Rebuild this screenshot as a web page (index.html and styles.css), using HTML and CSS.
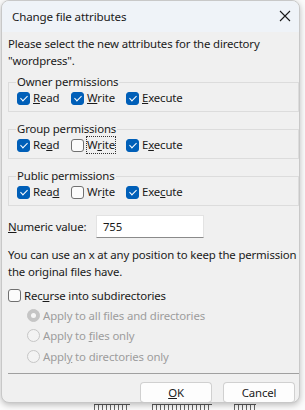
FILE: index.html
```html
<!DOCTYPE html>
<html>
<head>
<meta charset="utf-8">
<link rel="stylesheet" href="styles.css">
</head>
<body>
<div class="behind" aria-hidden="true">
  <span class="frag w1"></span><span class="frag w2"></span><span class="frag w3"></span>
</div>
<div class="dialog">
  <div class="titlebar">
    <span class="title">Change file attributes</span>
    <svg class="close" width="12" height="12" viewBox="0 0 12 12"><path d="M1 1 L11 11 M11 1 L1 11" stroke="#1a1a1a" stroke-width="1.1" fill="none"/></svg>
  </div>
  <div class="content">
    <p class="intro">Please select the new attributes for the directory<br>"wordpress".</p>
    <fieldset class="group">
      <legend>Owner permissions</legend>
      <div class="row">
        <label class="chk"><span class="box on"></span><span><u>R</u>ead</span></label>
        <label class="chk"><span class="box on"></span><span><u>W</u>rite</span></label>
        <label class="chk"><span class="box on"></span><span><u>E</u>xecute</span></label>
      </div>
    </fieldset>
    <fieldset class="group">
      <legend>Group permissions</legend>
      <div class="row">
        <label class="chk"><span class="box on"></span><span>Re<u>a</u>d</span></label>
        <label class="chk"><span class="box"></span><span class="focus">W<u>r</u>ite</span></label>
        <label class="chk"><span class="box on"></span><span>E<u>x</u>ecute</span></label>
      </div>
    </fieldset>
    <fieldset class="group">
      <legend>Public permissions</legend>
      <div class="row">
        <label class="chk"><span class="box on"></span><span>Rea<u>d</u></span></label>
        <label class="chk"><span class="box"></span><span>Wr<u>i</u>te</span></label>
        <label class="chk"><span class="box on"></span><span>Exe<u>c</u>ute</span></label>
      </div>
    </fieldset>
    <div class="numeric">
      <span class="numlabel"><u>N</u>umeric value:</span>
      <span class="input">755</span>
    </div>
    <p class="hint">You can use an x at any position to keep the permission<br>the original files have.</p>
    <label class="chk recurse"><span class="box"></span><span>Rec<u>u</u>rse into subdirectories</span></label>
    <div class="radios">
      <div class="radio"><span class="dot sel"></span><span>Apply to all files and directories</span></div>
      <div class="radio"><span class="dot"></span><span>Apply to <u>f</u>iles only</span></div>
      <div class="radio"><span class="dot"></span><span>Appl<u>y</u> to directories only</span></div>
    </div>
    <div class="sep"></div>
    <div class="buttons">
      <span class="btn"><u>O</u>K</span>
      <span class="btn">Cancel</span>
    </div>
  </div>
</div>
</body>
</html>
```
FILE: styles.css
```css
* { box-sizing: border-box; }
html, body { margin: 0; padding: 0; }
body {
  width: 305px;
  height: 410px;
  background: #fbfbfb;
  font-family: "Noto Sans", "Open Sans", sans-serif;
  font-size: 11.4px;
  letter-spacing: -0.15px;
  color: #1a1a1a;
  position: relative;
  overflow: hidden;
}
.behind {
  position: absolute;
  left: 0;
  top: 404px;
  width: 305px;
  display: flex;
  gap: 22px;
  padding-left: 94px;
}
.frag {
  height: 6px;
  border-top: 1px solid #555;
  background: repeating-linear-gradient(90deg, #666 0 1px, transparent 1px 4px);
}
.w1 { width: 36px; }
.w2 { width: 60px; }
.w3 { width: 22px; }
.dialog {
  position: relative;
  margin-left: 1px;
  width: 299px;
  height: 403px;
  background: #f0f0f0;
  border: 1px solid #c8c8c8;
  border-radius: 8px;
  box-shadow: 0 2px 6px rgba(0,0,0,0.25);
  overflow: hidden;
}
.titlebar {
  height: 31px;
  background: #eff3f8;
  display: flex;
  align-items: center;
  justify-content: space-between;
  padding: 0 8px 0 10px;
}
.title { font-size: 11.6px; margin-top: -1px; }
.close { margin-top: -1px; }
.content {
  padding: 3px 0 0 6px;
  width: 297px;
}
.intro {
  margin: 0 0 5px 0;
  line-height: 17px;
  white-space: nowrap;
}
.group {
  margin: 0 0 9px 0;
  padding: 0 0 5px 8px;
  border: 1px solid #dcdcdc;
  border-radius: 0;
  width: 291px;
}
.group legend {
  padding: 0 1px;
  margin-left: -1px;
  line-height: 16px;
}
.row {
  display: flex;
  line-height: 16px;
}
.chk {
  display: flex;
  align-items: center;
  gap: 3px;
}
.row .chk:nth-child(1) { width: 54px; }
.row .chk:nth-child(2) { width: 55px; }
.box {
  width: 13px;
  height: 13px;
  border-radius: 3px;
  border: 1px solid #707070;
  background: #fbfbfb;
  flex: none;
  position: relative;
}
.box.on {
  background: #005fb8;
  border-color: #005fb8;
}
.box.on::after {
  content: "";
  position: absolute;
  left: 3.5px;
  top: 1px;
  width: 3px;
  height: 6px;
  border-right: 1.3px solid #fff;
  border-bottom: 1.3px solid #fff;
  transform: rotate(45deg);
}
.focus {
  outline: 1px dotted #333;
  outline-offset: 0;
}
.numeric {
  display: flex;
  align-items: center;
  margin-top: 1px;
  height: 23px;
}
.numlabel { width: 88px; }
.input {
  width: 108px;
  height: 23px;
  background: #fff;
  border: 1px solid #e3e3e3;
  border-bottom-color: #8a8a8a;
  padding: 0 0 0 6px;
  line-height: 21px;
}
.hint {
  margin: 8px 0 0 0;
  line-height: 17px;
  white-space: nowrap;
}
.recurse {
  margin-top: 7px;
  height: 17px;
}
.radios {
  padding-left: 19px;
  margin-top: 1px;
  color: #9d9d9d;
}
.radio {
  display: flex;
  align-items: center;
  gap: 3px;
  height: 20.5px;
}
.dot {
  width: 13px;
  height: 13px;
  border-radius: 50%;
  border: 1px solid #c6c6c6;
  background: #f3f3f3;
  flex: none;
  position: relative;
}
.dot.sel {
  background: #c5c5c5;
  border-color: #c5c5c5;
}
.dot.sel::after {
  content: "";
  position: absolute;
  left: 3px;
  top: 3px;
  width: 5px;
  height: 5px;
  border-radius: 50%;
  background: #f7f7f7;
}
.sep {
  margin-top: 6px;
  width: 292px;
  height: 1px;
  background: #a0a0a0;
}
.buttons {
  display: flex;
  justify-content: flex-end;
  gap: 11px;
  padding: 8px 4px 0 0;
}
.btn {
  width: 72px;
  height: 21px;
  border: 1px solid #d0d0d0;
  border-bottom-color: #b8b8b8;
  border-radius: 4px;
  background: #fdfdfd;
  display: flex;
  align-items: center;
  justify-content: center;
}
```
